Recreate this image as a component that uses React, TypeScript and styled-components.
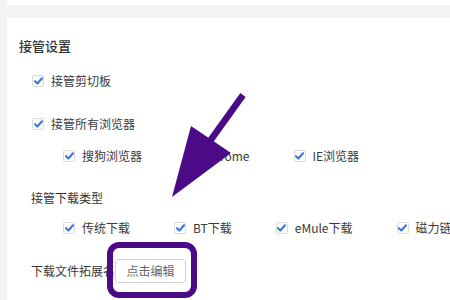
import React from "react";
import styled, { createGlobalStyle } from "styled-components";

const Global = createGlobalStyle`
  html, body { margin: 0; padding: 0; background: #f3f3f3; }
  body { font-family: "Microsoft YaHei", "Noto Sans CJK SC", sans-serif; }
`;

const Page = styled.div`
  position: relative;
  width: 450px;
  height: 300px;
  overflow: hidden;
  background: #f3f3f3;
  padding-left: 7px;
  box-sizing: border-box;
  display: flex;
  flex-direction: column;
`;

const TopPanel = styled.div`
  height: 5px;
  background: #ffffff;
  margin-bottom: 13px;
`;

const Panel = styled.div`
  flex: 1;
  background: #ffffff;
  padding: 18px 0 0 12px;
  display: flex;
  flex-direction: column;
  min-width: 0;
`;

const Title = styled.div`
  font-size: 13px;
  line-height: 20px;
  font-weight: 500;
  color: #333;
`;

const Section = styled.div`
  padding-left: 12px;
  display: flex;
  flex-direction: column;
`;

const Row = styled.div<{ $top: number; $indent?: number; $gap?: number }>`
  display: flex;
  align-items: center;
  height: 20px;
  margin-top: ${(p) => p.$top}px;
  padding-left: ${(p) => p.$indent ?? 0}px;
  gap: ${(p) => p.$gap ?? 0}px;
`;

const Heading = styled.div<{ $top: number }>`
  font-size: 12px;
  line-height: 20px;
  color: #333;
  margin-top: ${(p) => p.$top}px;
`;

const Item = styled.label`
  display: flex;
  align-items: center;
  gap: 7px;
  font-size: 12px;
  line-height: 20px;
  color: #3a3a3a;
  white-space: nowrap;
`;

const Box = styled.span`
  width: 12px;
  height: 12px;
  box-sizing: border-box;
  border: 1px solid #dadada;
  border-radius: 2px;
  background: #fff;
  display: inline-flex;
  align-items: center;
  justify-content: center;
  flex: none;
`;

const ExtRow = styled.div`
  display: flex;
  align-items: center;
  height: 24px;
  margin-top: 20px;
`;

const ExtLabel = styled.span`
  font-size: 12px;
  color: #3a3a3a;
  white-space: nowrap;
  width: 84px;
`;

const ButtonWrap = styled.div`
  position: relative;
`;

const EditButton = styled.button`
  width: 71px;
  height: 24px;
  box-sizing: border-box;
  border: 1px solid #d4d4d4;
  border-radius: 3px;
  background: #fff;
  color: #666;
  font-family: inherit;
  font-size: 12px;
  padding: 0;
`;

const Highlight = styled.div`
  position: absolute;
  left: -8px;
  top: -15px;
  width: 90px;
  height: 56px;
  box-sizing: border-box;
  border: 6px solid #4b0a86;
  border-radius: 12px;
  pointer-events: none;
`;

const ArrowLayer = styled.svg`
  position: absolute;
  left: 0;
  top: 0;
  width: 450px;
  height: 300px;
  pointer-events: none;
`;

function Check({ label }: { label: string }) {
  return (
    <Item>
      <Box>
        <svg width="9" height="8" viewBox="0 0 9 8">
          <path d="M1 4.2 L3.4 6.5 L8 1.3" fill="none" stroke="#3a78dc" strokeWidth="2.1" strokeLinecap="round" strokeLinejoin="round" />
        </svg>
      </Box>
      {label}
    </Item>
  );
}

export default function App() {
  return (
    <>
      <Global />
      <Page>
        <TopPanel />
        <Panel>
          <Title>接管设置</Title>
          <Section>
            <Row $top={15} $indent={1}>
              <Check label="接管剪切板" />
            </Row>
            <Row $top={23} $indent={1}>
              <Check label="接管所有浏览器" />
            </Row>
            <Row $top={12} $indent={32} $gap={44}>
              <Check label="搜狗浏览器" />
              <Check label="Chrome" />
              <Check label="IE浏览器" />
            </Row>
            <Heading $top={22}>接管下载类型</Heading>
            <Row $top={10} $indent={32} $gap={44}>
              <Check label="传统下载" />
              <Check label="BT下载" />
              <Check label="eMule下载" />
              <Check label="磁力链接" />
            </Row>
            <ExtRow>
              <ExtLabel>下载文件拓展名</ExtLabel>
              <ButtonWrap>
                <EditButton>点击编辑</EditButton>
                <Highlight />
              </ButtonWrap>
            </ExtRow>
          </Section>
        </Panel>
        <ArrowLayer viewBox="0 0 450 300">
          <line x1="243" y1="95" x2="210" y2="141" stroke="#4b0a86" strokeWidth="6.5" />
          <polygon points="191,126 231,153 172,197" fill="#4b0a86" />
        </ArrowLayer>
      </Page>
    </>
  );
}
